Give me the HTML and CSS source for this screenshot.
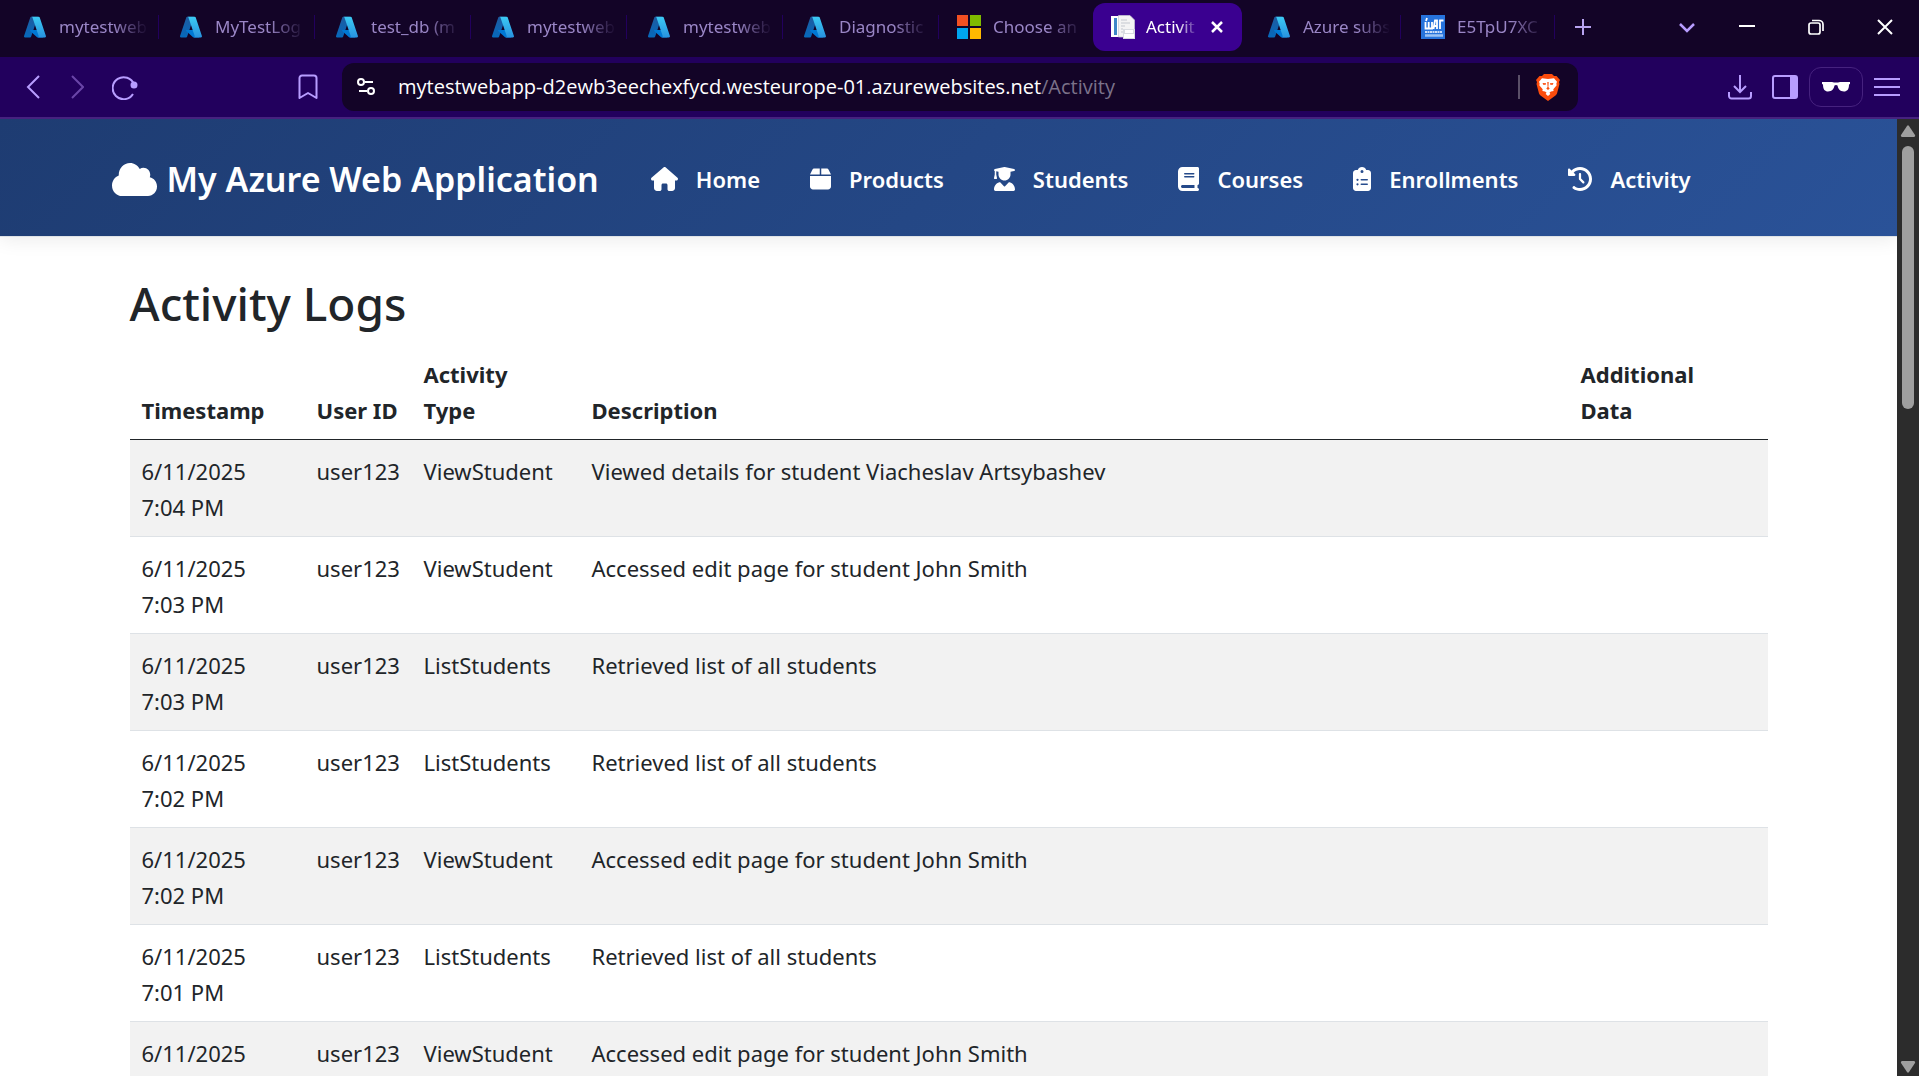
FILE: index.html
```html
<!DOCTYPE html>
<html lang="en">
<head>
<meta charset="utf-8">
<title>Activity Logs - My Azure Web Application</title>
<link rel="stylesheet" href="styles.css">
</head>
<body>
<svg class="defs" aria-hidden="true">
  <defs>
    <linearGradient id="az-dark" x1="0" y1="0" x2="0" y2="1"><stop offset="0" stop-color="#1e5a9e"/><stop offset="1" stop-color="#0669bc"/></linearGradient>
    <linearGradient id="az-light" x1="0" y1="0" x2="0" y2="1"><stop offset="0" stop-color="#3ccbf4"/><stop offset="1" stop-color="#2892df"/></linearGradient>
    <symbol id="azure" viewBox="0 0 96 96">
      <path fill="url(#az-dark)" d="M33.3 6.5h26l-27 80.2a4.2 4.2 0 0 1-3.9 2.8H8.1a4.1 4.1 0 0 1-3.9-5.5L29.4 9.4a4.2 4.2 0 0 1 3.9-2.9z"/>
      <path fill="#0078d4" d="M71.200 60.300H29.900a1.900 1.900 0 0 0-1.300 3.300l26.500 24.800a4.200 4.200 0 0 0 2.900 1.100h23.400z"/>
      <path fill="url(#az-light)" d="M66.600 9.400a4.100 4.100 0 0 0-3.900-2.900H33.600a4.200 4.200 0 0 1 3.900 2.900l25.200 74.700a4.200 4.200 0 0 1-3.900 5.400h29a4.200 4.200 0 0 0 3.900-5.400z"/>
    </symbol>
  </defs>
</svg>

<div class="tabstrip">
  <nav class="tabs" aria-label="Browser tabs">
    <a class="tab" href="#"><svg class="fav"><use href="#azure"/></svg><span class="tab-title">mytestweb</span></a>
    <a class="tab" href="#"><svg class="fav"><use href="#azure"/></svg><span class="tab-title">MyTestLog</span></a>
    <a class="tab" href="#"><svg class="fav"><use href="#azure"/></svg><span class="tab-title">test_db (m</span></a>
    <a class="tab" href="#"><svg class="fav"><use href="#azure"/></svg><span class="tab-title">mytestweb</span></a>
    <a class="tab" href="#"><svg class="fav"><use href="#azure"/></svg><span class="tab-title">mytestweb</span></a>
    <a class="tab" href="#"><svg class="fav"><use href="#azure"/></svg><span class="tab-title">Diagnostic</span></a>
    <a class="tab plain" href="#"><svg class="fav" viewBox="0 0 24 24"><path fill="#f25022" d="M0 0h11v11H0z"/><path fill="#7fba00" d="M13 0h11v11H13z"/><path fill="#00a4ef" d="M0 13h11v11H0z"/><path fill="#ffb900" d="M13 13h11v11H13z"/></svg><span class="tab-title">Choose an</span></a>
    <div class="tab active"><svg class="fav" viewBox="0 0 24 24"><path fill="#fff" d="M0 1h14v21H0z"/><path fill="#3f87c8" d="M3 3h3v17H3z"/><path fill="#f4f4f4" stroke="#c9ccd2" stroke-width=".7" d="M7.500.5H19l4.500 4.500v17h-16z"/><path stroke="#c4c8cf" d="M10 5h6M10 8h9M10 11h4M10 14h2M10 17h2"/><path fill="#d9dce1" d="M12 14h12v10H12z"/><path fill="#fff" d="M14 15h8v3h-8zm-1 4h10v4H13z"/></svg><span class="tab-title">Activit</span><button class="icon-btn" aria-label="Close tab"><svg width="14" height="14" viewBox="0 0 14 14" fill="none" stroke="#fff" stroke-width="2.500"><path d="m2 2 10 10M12 2 2 12"/></svg></button></div>
    <a class="tab" href="#"><svg class="fav"><use href="#azure"/></svg><span class="tab-title">Azure subs</span></a>
    <a class="tab" href="#"><svg class="fav" viewBox="0 0 24 24"><path fill="#2673dc" d="M0 0h24v24H0z"/><path fill="none" stroke="#fff" stroke-width="1.800" d="M4.500 7v6.500h6.500V7M7.700 7v6.500M12.500 14l1.500-8.500h2V14M13 11h3M19 14V5.500h3.500M5 6l1-3"/><path stroke="#fff" stroke-width="1.500" stroke-dasharray="2 .5" d="M4 17h17"/><path stroke="#9cc3f5" stroke-width="2.500" d="M4 20.500h18"/></svg><span class="tab-title">E5TpU7XC</span></a>
  </nav>
  <button class="icon-btn new-tab" aria-label="New tab"><svg width="16" height="16" viewBox="0 0 16 16" stroke="#b8a3f0" stroke-width="2"><path d="M8 0v16M0 8h16"/></svg></button>
  <button class="icon-btn tab-search" aria-label="Search tabs"><svg width="16" height="16" viewBox="0 0 16 16" fill="none" stroke="#b89dff" stroke-width="2.500"><path d="m1 5 7 7 7-7"/></svg></button>
  <div class="window-controls">
    <button class="icon-btn" aria-label="Minimize"><svg width="16" height="16" viewBox="0 0 16 16" stroke="#fff" stroke-width="2"><path d="M0 7h16"/></svg></button>
    <button class="icon-btn" aria-label="Restore"><svg width="16" height="16" viewBox="0 0 16 16" fill="none" stroke="#fff" stroke-width="1.700"><rect x="1" y="4" width="11" height="11" rx="2"/><path d="M4 1.500h7a4 4 0 0 1 4 4V12"/></svg></button>
    <button class="icon-btn" aria-label="Close"><svg width="16" height="16" viewBox="0 0 16 16" stroke="#fff" stroke-width="2"><path d="m1 1 14 14M15 1 1 15"/></svg></button>
  </div>
</div>

<div class="toolbar">
  <div class="history">
    <button class="icon-btn" aria-label="Back"><svg width="14" height="24" viewBox="0 0 14 24" fill="none" stroke="#b89dff" stroke-width="2"><path d="M13 1 2 12l11 11"/></svg></button>
    <button class="icon-btn" aria-label="Forward"><svg width="16" height="24" viewBox="0 0 16 24" fill="none" stroke="#6a45a8" stroke-width="2"><path d="m4 1 11 11L4 23"/></svg></button>
    <button class="icon-btn" aria-label="Reload"><svg width="26" height="26" viewBox="0 0 26 26" fill="none" stroke="#b89dff" stroke-width="2"><path d="M22 10.500A11 11 0 1 0 21 20"/><circle cx="22" cy="11" r="2.500" fill="#b89dff"/></svg></button>
  </div>
  <button class="icon-btn bookmark" aria-label="Bookmark"><svg width="20" height="26" viewBox="0 0 20 26" fill="none" stroke="#b89dff" stroke-width="2" stroke-linejoin="round"><path d="M4 1.500h12a2.500 2.500 0 0 1 2.500 2.500v20L10 19l-8.500 5V4A2.500 2.500 0 0 1 4 1.500z"/></svg></button>
  <div class="address">
    <svg width="20" height="20" viewBox="0 0 20 20" fill="none" stroke="#fff" stroke-width="2"><circle cx="5" cy="5" r="3"/><path d="M9 5h8M3 14h8"/><circle cx="15" cy="14" r="3"/></svg>
    <a class="url" href="#">mytestwebapp-d2ewb3eechexfycd.westeurope-01.azurewebsites.net<span class="path">/Activity</span></a>
    <span class="divider"></span>
    <button class="icon-btn" aria-label="Brave Shields"><svg width="24" height="28" viewBox="0 0 24 28"><path fill="#fb4c0c" d="M8 1h8l2 2h2.500L24 7l-1 2 .5 2-2.500 9.500a4 4 0 0 1-1.500 2L12 28l-7.500-5.500a4 4 0 0 1-1.500-2L.5 11 1 9 0 7l3.500-4H6z"/><path fill="#fff" d="M8 5.500 12 6l4-.5 2-.3 3 3.600-.7 2 .4 1.500-3.400 4 .3 1.800-2.600.4-1.500 1 .8 1.500L12 23l-2.300-2 .8-1.500-1.500-1-2.600-.4.300-1.800-3.400-4 .4-1.500-.7-2 3-3.600z"/><path fill="#fb4c0c" d="m6.500 10 3.500.3v1.200L7.500 12zm11 0-3.500.3v1.200l2.500.5zM11.300 9h1.400l-.3 5 1.300 1.500L12 17l-1.700-1.500L11.600 14z"/></svg></button>
  </div>
  <div class="tools">
    <button class="icon-btn" aria-label="Downloads"><svg width="24" height="26" viewBox="0 0 24 26" fill="none" stroke="#b89dff" stroke-width="2"><path d="M12 1v17M6 12l6 6 6-6M1 18v4a2.500 2.500 0 0 0 2.500 2.500h17A2.500 2.500 0 0 0 23 22v-4"/></svg></button>
    <button class="icon-btn" aria-label="Sidebar"><svg width="26" height="24" viewBox="0 0 26 24"><rect x="1" y="1" width="24" height="22" rx="2" fill="none" stroke="#b89dff" stroke-width="2"/><path fill="#b89dff" d="M18 1h7v22h-7z"/></svg></button>
    <button class="icon-btn private" aria-label="Private window"><svg width="28" height="10" viewBox="0 0 28 10"><path fill="#fff" d="M0 0h10q4 1 8 0h10v2l-1 .5c0 5-2 7-5 7-4 0-6-3-6.500-6q-1.500-.8-3 0C12 6.500 10 9.500 6 9.500c-3 0-5-2-5-7L0 2z"/></svg></button>
    <button class="icon-btn" aria-label="Menu"><svg width="26" height="20" viewBox="0 0 26 20" stroke="#b89dff" stroke-width="2"><path d="M0 2h26M0 10h26M0 18h26"/></svg></button>
  </div>
</div>

<div class="viewport">
  <div class="page">
    <header class="site-header">
      <div class="container header-row">
        <a class="brand" href="#"><svg width="45" height="33" viewBox="0 32 640 448" preserveAspectRatio="none"><path d="M0 336c0 79.500 64.500 144 144 144h368c70.700 0 128-57.300 128-128 0-61.900-44-113.600-102.400-125.400 4.100-10.700 6.400-22.400 6.400-34.600 0-53-43-96-96-96-19.700 0-38.100 6-53.300 16.200C367 64.200 315.300 32 256 32 167.600 32 96 103.600 96 192c0 2.700.1 5.400.2 8.100C40.200 219.800 0 273.200 0 336z"/></svg>My Azure Web Application</a>
        <nav class="menu" aria-label="Main">
          <a href="#"><svg width="27" height="24" viewBox="0 0 576 512"><path d="M575.800 255.500c0 18-15 32.100-32 32.100h-32l.7 160.200c.2 35.300-28.400 64.200-63.700 64.200H392c-22 0-40-18-40-40v-88c0-17.700-14.300-32-32-32h-64c-17.700 0-32 14.300-32 32v88c0 22-18 40-40 40h-56c-35.300 0-64-28.700-64-64V287.600H32c-18 0-32-14-32-32.100 0-9 3-17 10-24L266.400 8c7-7 15-8 22-8s15 2 21 7l255.400 224.500c8 7 12 15 11 24z"/></svg>Home</a>
          <a href="#"><svg width="21" height="24" viewBox="0 0 448 512"><path d="M50.700 58.500 0 160h208V32H93.700c-18.200 0-34.800 10.300-43 26.500zM240 160h208L397.300 58.500c-8.200-16.200-24.800-26.500-43-26.500H240v128zm208 32H0v224c0 35.300 28.700 64 64 64h320c35.300 0 64-28.700 64-64V192z"/></svg>Products</a>
          <a href="#"><svg width="21" height="24" viewBox="0 0 448 512"><path d="M219.300.5c3.100-.6 6.300-.6 9.400 0l200 40C439.900 42.700 448 52.600 448 64s-8.100 21.300-19.300 23.500L352 102.900V160c0 70.700-57.300 128-128 128S96 230.700 96 160v-57.100l-48-9.600v65.100l15.700 78.400c.9 4.700-.3 9.600-3.300 13.300S52.800 256 48 256H16c-4.800 0-9.300-2.100-12.400-5.900s-4.300-8.600-3.300-13.300L16 158.400V86.600C6.500 83.300 0 74.300 0 64c0-11.400 8.100-21.300 19.300-23.500l200-40zM111.900 327.700c10.500-3.400 21.800.4 29.400 8.500l71 75.500c6.300 6.700 17 6.700 23.300 0l71-75.500c7.600-8.100 18.900-11.900 29.400-8.500C401 348.600 448 409.400 448 481.300c0 17-13.800 30.700-30.700 30.700H30.700C13.800 512 0 498.200 0 481.300c0-71.900 47-132.700 111.900-153.600z"/></svg>Students</a>
          <a href="#"><svg width="21" height="24" viewBox="0 0 448 512"><path fill-rule="evenodd" d="M96 0C43 0 0 43 0 96v320c0 53 43 96 96 96h320c17.700 0 32-14.300 32-32s-14.300-32-32-32v-64c17.700 0 32-14.300 32-32V32c0-17.700-14.300-32-32-32H96zm0 384h256v64H96c-17.700 0-32-14.300-32-32s14.300-32 32-32zm32-240c0-8.800 7.200-16 16-16h192c8.800 0 16 7.200 16 16s-7.200 16-16 16H144c-8.800 0-16-7.200-16-16zm16 48h192c8.800 0 16 7.200 16 16s-7.200 16-16 16H144c-8.800 0-16-7.200-16-16s7.200-16 16-16z"/></svg>Courses</a>
          <a href="#"><svg width="18" height="24" viewBox="0 0 384 512"><path fill-rule="evenodd" d="M192 0c-41.800 0-77.400 26.700-90.500 64H64C28.700 64 0 92.700 0 128v320c0 35.300 28.700 64 64 64h256c35.300 0 64-28.700 64-64V128c0-35.300-28.700-64-64-64h-37.500C269.400 26.700 233.800 0 192 0zm0 64a32 32 0 1 1 0 64 32 32 0 1 1 0-64zM72 272a24 24 0 1 1 48 0 24 24 0 1 1-48 0zm104-16h128c8.800 0 16 7.200 16 16s-7.200 16-16 16H176c-8.800 0-16-7.200-16-16s7.200-16 16-16zM72 368a24 24 0 1 1 48 0 24 24 0 1 1-48 0zm88 0c0-8.800 7.200-16 16-16h128c8.800 0 16 7.200 16 16s-7.200 16-16 16H176c-8.800 0-16-7.200-16-16z"/></svg>Enrollments</a>
          <a href="#"><svg width="24" height="24" viewBox="0 0 512 512"><path d="M75 75 41 41C25.900 25.900 0 36.600 0 57.900V168c0 13.300 10.700 24 24 24h110.100c21.400 0 32.100-25.900 17-41l-30.800-30.800C155 85.500 203 64 256 64c106 0 192 86 192 192s-86 192-192 192c-40.800 0-78.600-12.700-109.700-34.400-14.500-10.100-34.400-6.600-44.600 7.900s-6.600 34.400 7.900 44.600C151.200 495 201.700 512 256 512c141.400 0 256-114.600 256-256S397.400 0 256 0C185.300 0 121.300 28.700 75 75zm181 53c-13.300 0-24 10.700-24 24v104c0 6.400 2.500 12.500 7 17l72 72c9.400 9.400 24.600 9.400 33.900 0s9.400-24.600 0-33.900l-65-65V152c0-13.300-10.700-24-24-24z"/></svg>Activity</a>
        </nav>
      </div>
    </header>
    <main class="container content">
      <h1>Activity Logs</h1>
      <table class="logs">
        <colgroup><col class="c-time"><col class="c-user"><col class="c-type"><col><col class="c-data"></colgroup>
        <thead><tr><th>Timestamp</th><th>User ID</th><th class="wraps">Activity Type</th><th>Description</th><th class="wraps">Additional Data</th></tr></thead>
        <tbody>
          <tr><td>6/11/2025 7:04 PM</td><td>user123</td><td>ViewStudent</td><td>Viewed details for student Viacheslav Artsybashev</td><td></td></tr>
          <tr><td>6/11/2025 7:03 PM</td><td>user123</td><td>ViewStudent</td><td>Accessed edit page for student John Smith</td><td></td></tr>
          <tr><td>6/11/2025 7:03 PM</td><td>user123</td><td>ListStudents</td><td>Retrieved list of all students</td><td></td></tr>
          <tr><td>6/11/2025 7:02 PM</td><td>user123</td><td>ListStudents</td><td>Retrieved list of all students</td><td></td></tr>
          <tr><td>6/11/2025 7:02 PM</td><td>user123</td><td>ViewStudent</td><td>Accessed edit page for student John Smith</td><td></td></tr>
          <tr><td>6/11/2025 7:01 PM</td><td>user123</td><td>ListStudents</td><td>Retrieved list of all students</td><td></td></tr>
          <tr><td>6/11/2025</td><td>user123</td><td>ViewStudent</td><td>Accessed edit page for student John Smith</td><td></td></tr>
        </tbody>
      </table>
    </main>
  </div>
  <div class="scrollbar" aria-hidden="true">
    <svg width="16" height="12" viewBox="0 0 16 12"><path fill="#9f9f9f" d="M7 1q1-1.500 2 0l6 9q.5 1.500-1 2H2q-1.500-.5-1-2z"/></svg>
    <div class="track"><div class="thumb"></div></div>
    <svg width="16" height="12" viewBox="0 0 16 12"><path fill="#9f9f9f" d="M7 11q1 1.500 2 0l6-9q.5-1.500-1-2H2Q.5.500 1 2z"/></svg>
  </div>
</div>
</body>
</html>
```
FILE: styles.css
```css
* { box-sizing: border-box; }

body {
  margin: 0;
  height: 100vh;
  display: flex;
  flex-direction: column;
  overflow: hidden;
  font-family: "Noto Sans", "Open Sans", sans-serif;
  font-size: 22px;
  line-height: 36px;
  color: #212529;
  background: #fff;
}

a { color: inherit; text-decoration: none; }
svg { display: block; flex: none; }
.defs { position: absolute; width: 0; height: 0; }

.icon-btn {
  display: flex;
  align-items: center;
  justify-content: center;
  flex: none;
  padding: 0;
  border: 0;
  background: none;
}

/* Tab strip */
.tabstrip {
  flex: none;
  display: flex;
  align-items: center;
  height: 57px;
  padding: 0 26px 3px 3px;
  background: #130427;
}
.tabs {
  flex: 0 1 1552px;
  display: grid;
  grid-template-columns: repeat(6, 156fr) repeat(4, 154fr);
  align-items: center;
}
.tab {
  display: flex;
  align-items: center;
  gap: 12px;
  height: 24px;
  padding: 0 8px 0 20px;
  border-right: 1px solid #22005d;
  color: #9a86c6;
  font-size: 17px;
  line-height: 24px;
  min-width: 0;
}
.tab.plain { border-color: transparent; padding-left: 18px; }
.fav { width: 24px; height: 24px; }
.tab-title {
  flex: 1;
  min-width: 0;
  overflow: hidden;
  white-space: nowrap;
  mask-image: linear-gradient(to right, #000 60%, transparent 98%);
}
.tab.active {
  gap: 11px;
  height: 48px;
  padding: 0 18px;
  margin: 0 5px 0 0;
  border: 0;
  border-radius: 12px;
  background: #3a0090;
  color: #fff;
}
.new-tab { margin-left: 20px; }
.tab-search { margin-left: auto; }
.window-controls { display: flex; gap: 53px; margin-left: 44px; }

/* Toolbar */
.toolbar {
  flex: none;
  display: flex;
  align-items: center;
  height: 62px;
  padding: 0 19px 0 26px;
  background: #22005d;
  border-bottom: 2px solid #46227f;
}
.history { display: flex; align-items: center; gap: 28px; }
.bookmark { margin-left: 160px; }
.address {
  flex: 0 1 1236px;
  display: flex;
  align-items: center;
  height: 48px;
  margin-left: 24px;
  padding: 0 18px 0 14px;
  border-radius: 12px;
  background: #130427;
  font-family: "Open Sans", "Noto Sans", sans-serif;
  font-size: 20px;
  line-height: 28px;
  white-space: nowrap;
}
.url { margin-left: 22px; color: #fff; }
.path { color: #7b728a; }
.divider { width: 2px; height: 24px; margin: 0 16px 0 auto; background: #5b5068; }
.tools { display: flex; align-items: center; gap: 11px; margin-left: auto; }
.tools .icon-btn:first-child { margin-right: 9px; }
.private { width: 54px; height: 40px; border: 1px solid #46227f; border-radius: 12px; }

/* Page */
.viewport { flex: 1; min-height: 0; display: flex; }
.page { flex: 1; min-width: 0; overflow: hidden; }
.container { max-width: 1710px; margin: 0 auto; }

.site-header {
  background: linear-gradient(135deg, #1e3c72 0%, #2a5298 100%);
  border-bottom: 1px solid #dee2e6;
  box-shadow: 0 3px 18px rgba(0, 0, 0, .08);
  color: #fff;
  font-weight: 600;
}
.header-row {
  display: flex;
  align-items: center;
  height: 117px;
  padding: 3px 18px 0;
}
.brand {
  display: flex;
  align-items: center;
  gap: 10px;
  font-size: 34px;
  white-space: nowrap;
}
.menu { display: flex; gap: 50px; margin-left: 52px; }
.menu a { display: flex; align-items: center; gap: 18px; }
.site-header svg { fill: #fff; }

.content { padding: 37px 36px 0; }
h1 { margin: 0 0 11px; font-size: 46px; line-height: 58px; font-weight: 500; }

.logs { width: 100%; table-layout: fixed; border-collapse: collapse; }
.c-time { width: 175px; }
.c-user { width: 107px; }
.c-type { width: 168px; }
.c-data { width: 199px; }
.logs th, .logs td { padding: 13px 12px 11px; border-bottom: 1px solid #dee2e6; text-align: left; vertical-align: top; }
.logs th { font-weight: 700; vertical-align: bottom; border-bottom-color: #212529; }
.logs th.wraps { padding-right: 48px; }
.logs td:first-child { padding-right: 40px; }
.logs tbody tr:nth-child(odd) { background: #f2f2f2; }

/* Scrollbar */
.scrollbar {
  flex: none;
  display: flex;
  flex-direction: column;
  align-items: center;
  gap: 9px;
  width: 22px;
  padding: 6px 0 3px;
  background: #2c2c2c;
}
.track { flex: 1; width: 12px; }
.thumb { height: 29%; border-radius: 6px; background: #9f9f9f; }
```
